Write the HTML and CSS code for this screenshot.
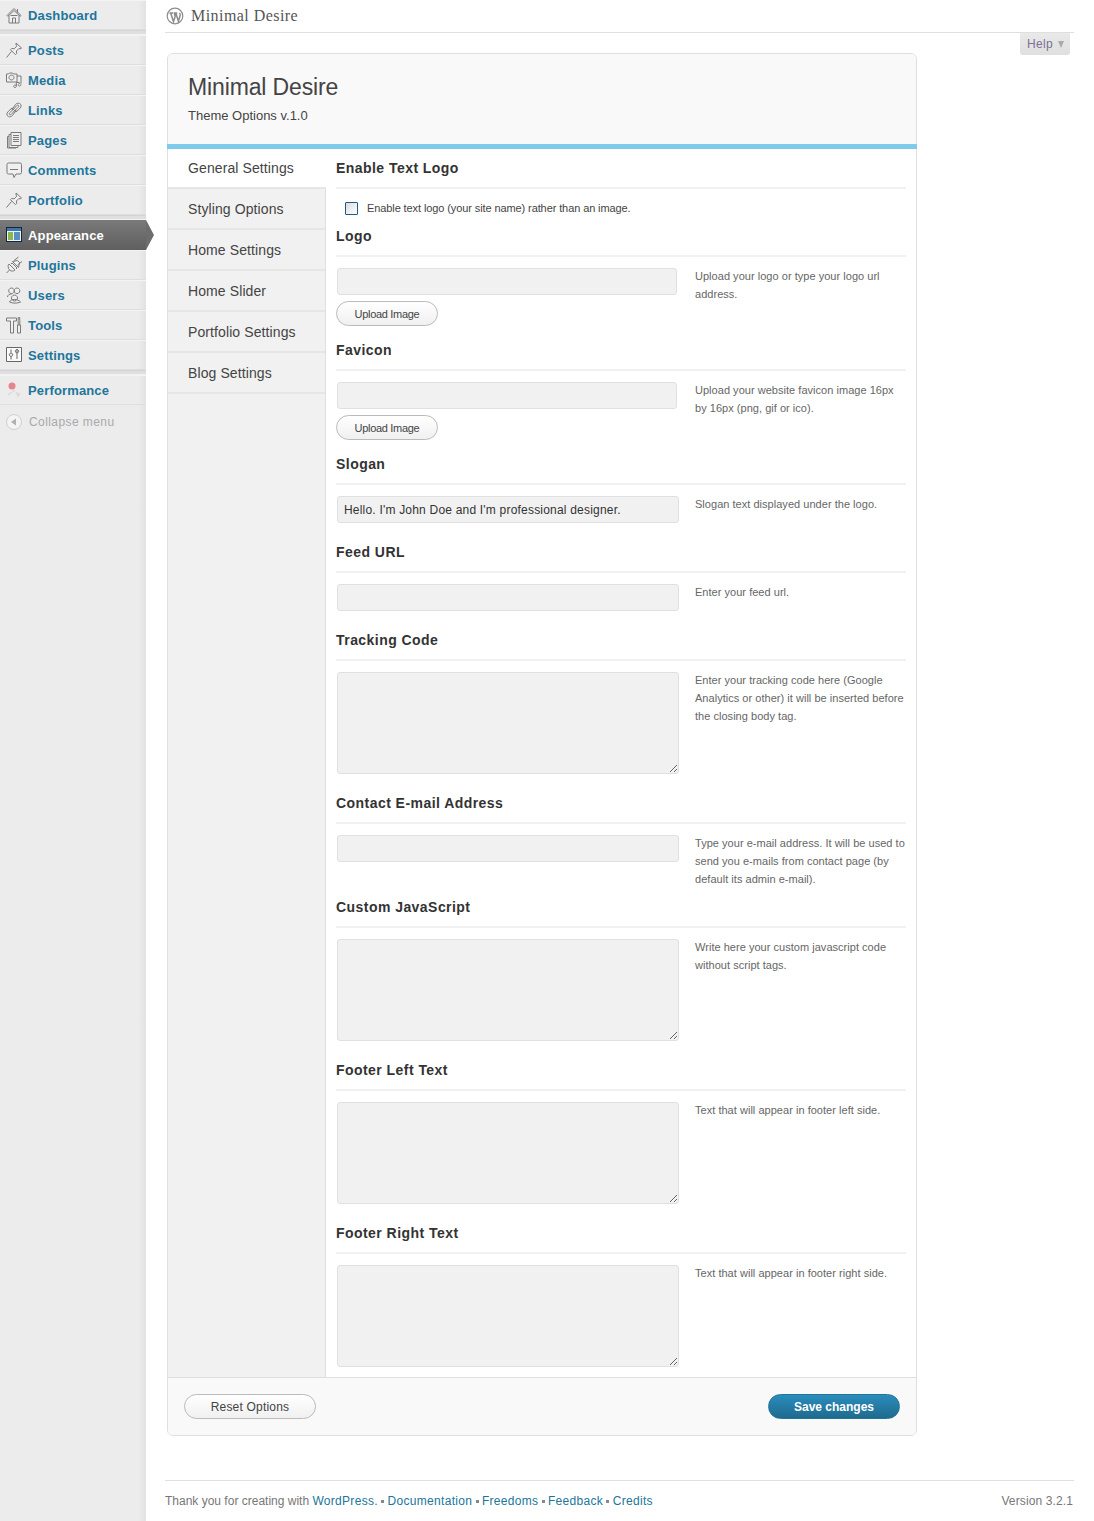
FILE: index.html
```html
<!DOCTYPE html>
<html lang="en">
<head>
<meta charset="utf-8">
<title>Minimal Desire</title>
<link rel="stylesheet" href="styles.css">
</head>
<body>
<div class="shell">
<nav class="side">
  <ul class="menu">
    <li class="item"><svg class="ico" viewBox="0 0 18 18"><path d="M2 9.500 9 2.500l7 7-.8.8L9 4.500 2.800 10.300zM4 9.500V17h10V9.500M7.500 17v-5h3v5M12.500 3v3.500M5.500 9.500h7" /></svg><a href="#">Dashboard</a></li>
    <li class="sep"></li>
    <li class="item"><svg class="ico" viewBox="0 0 18 18"><path d="M11 2l5.500 5-1.500 1-1-.6-2.600 2.600.3 2.500-1.200 1.200-5-5 1.200-1.200 2.500.3 2.600-2.600-.6-1zM6.500 10.500 1.500 16.500" /></svg><a href="#">Posts</a></li>
    <li class="item"><svg class="ico" viewBox="0 0 18 18"><path d="M1.500 3h2l1-1h3l1 1h3.500v8H1.500zM6.500 4a2.500 2.500 0 1 0 .01 0zM12 5h4v7.500M14.500 12.500a1.300 1.300 0 1 0 .01 0zM10 14a1.300 1.300 0 1 0 .01 0zM11.300 15v-3.500h3.200" /></svg><a href="#">Media</a></li>
    <li class="item"><svg class="ico" viewBox="0 0 18 18"><path d="M7 8.500l3.500-5c1.500-2 5-1.500 5.500.5.400 1.500-.5 2.800-1.500 3.800l-3.500 3.200-1.500-1 3.500-3.500c1-1 1-2 .3-2.300-.8-.4-1.500.2-2 .8L8 9zM11 9.500l-3.500 5c-1.500 2-5 1.500-5.500-.5-.400-1.500.5-2.800 1.500-3.800L7 7l1.500 1L5 11.500c-1 1-1 2-.3 2.300.8.400 1.500-.2 2-.8L10 9z" /></svg><a href="#">Links</a></li>
    <li class="item"><svg class="ico" viewBox="0 0 18 18"><path d="M6 1.500h10v13H6zM6 3.500H4v13h9v-2M4 5.500H2.500v11.500H11v-.5M8 4.500h6M8 6.500h6M8 8.500h6M8 10.500h6" /></svg><a href="#">Pages</a></li>
    <li class="item"><svg class="ico" viewBox="0 0 18 18"><path d="M3.500 2h11.500a1.500 1.500 0 0 1 1.500 1.500v8a1.500 1.500 0 0 1-1.500 1.500H11l-2 3.500-1-3.500H3.500a1.500 1.500 0 0 1-1.500-1.500v-8A1.500 1.500 0 0 1 3.500 2zM5 8.500h8" /></svg><a href="#">Comments</a></li>
    <li class="item"><svg class="ico" viewBox="0 0 18 18"><path d="M11 2l5.500 5-1.500 1-1-.6-2.600 2.600.3 2.500-1.200 1.200-5-5 1.200-1.200 2.500.3 2.600-2.600-.6-1zM6.500 10.500 1.500 16.500" /></svg><a href="#">Portfolio</a></li>
    <li class="sep"></li>
    <li class="item current"><svg class="ico-app" viewBox="0 0 18 18"><rect x="1.500" y="1.500" width="15" height="14" fill="#eef3f8" stroke="#15263a"/><rect x="2" y="2" width="14" height="3" fill="#3f74ad"/><rect x="3" y="6" width="5" height="8" fill="#8ab84e"/><rect x="9" y="6" width="6" height="8" fill="#5a8fc4"/></svg><a href="#">Appearance</a></li>
    <li class="item"><svg class="ico" viewBox="0 0 18 18"><path d="M1.500 17l3-3M4 8l6 6c-1.500 1.500-4 1.500-5.500-.2S2.500 9.500 4 8zM6 8l1-1 5 5-1 1M9 4.500 13.500 1M12.500 9l4.500-3.500M7.500 5.500l5-1 2 2-1 5z" /></svg><a href="#">Plugins</a></li>
    <li class="item"><svg class="ico" viewBox="0 0 18 18"><path d="M6.500 2a2.800 2.800 0 1 0 .01 0zM12 2a2.800 2.800 0 1 0 .01 0zM2.500 11c0-2 2-3 4-3M9.500 9a3 3 0 1 0 .01 0zM4.500 16c1-2 2.500-2.500 5-2.500s4.500.8 6 2.500c-3 1.500-8 1.500-11 0z" /></svg><a href="#">Users</a></li>
    <li class="item"><svg class="ico" viewBox="0 0 18 18"><path d="M1.500 2h10v3H8.500v12h-3V5h-4zM12.500 9h3v8h-3zM13.200 9V4.500L13.300 1.500h1.400l.1 3V9" /></svg><a href="#">Tools</a></li>
    <li class="item"><svg class="ico-set" viewBox="0 0 18 18"><path d="M1.500 1.500h15v14h-15zM6 3.500v3M12 3.500v3M6 7a1.700 1.700 0 1 0 .01 0zM12 3.500a1.700 1.700 0 1 0 .01 0zM12 7v6M6 10.500v3" /></svg><a href="#">Settings</a></li>
    <li class="sep"></li>
    <li class="item"><svg class="ico-perf" viewBox="0 0 18 18"><circle cx="7" cy="5" r="3.500" fill="#e8858b"/><path d="M8 8l1 3M3 14l4-3M12 15l3-3M11 11l3 4" fill="none" stroke="#d9d9d9" stroke-width="1.500"/></svg><a href="#">Performance</a></li>
    <li class="collapse"><svg class="ico-col" viewBox="0 0 18 18"><circle cx="9" cy="9" r="7.500" fill="#f4f4f4" stroke="#d0d0d0"/><path d="M11 5.500v7L6 9z" fill="#b0b0b0"/></svg><span>Collapse menu</span></li>
  </ul>
</nav>
<div class="main">
  <header class="top">
    <svg class="wp" viewBox="0 0 18 18"><circle cx="9" cy="9" r="7.800" fill="none" stroke="#8c8c8c" stroke-width="1.200"/><path d="M3.500 6h3.500M4.600 6l2.900 8.500 1.700-5.300-1-3.200M7.600 6h3.600M9.800 6l2.600 8.300 1.700-5.500c.3-1 0-2.200-.7-2.800" fill="none" stroke="#8c8c8c" stroke-width="1.500"/></svg>
    <h1 class="page-title">Minimal Desire</h1>
  </header>
  <div class="help-row"><button class="help" type="button">Help<span class="tri"></span></button></div>

  <form class="panel">
    <div class="panel-head">
      <h2 class="panel-title">Minimal Desire</h2>
      <p class="panel-sub">Theme Options v.1.0</p>
    </div>
    <div class="panel-body">
      <ul class="tabs">
        <li class="tab active">General Settings</li>
        <li class="tab">Styling Options</li>
        <li class="tab">Home Settings</li>
        <li class="tab">Home Slider</li>
        <li class="tab">Portfolio Settings</li>
        <li class="tab">Blog Settings</li>
      </ul>
      <div class="content">
        <section class="opt">
          <h3 class="opt-h">Enable Text Logo</h3>
          <label class="check"><input class="box" type="checkbox"><span class="check-text">Enable text logo (your site name) rather than an image.</span></label>
        </section>
        <section class="opt">
          <h3 class="opt-h">Logo</h3>
          <div class="row">
            <div class="field upload"><input class="inp short" type="text"><button class="btn" type="button">Upload Image</button></div>
            <p class="desc">Upload your logo or type your logo url address.</p>
          </div>
        </section>
        <section class="opt">
          <h3 class="opt-h">Favicon</h3>
          <div class="row">
            <div class="field upload"><input class="inp short" type="text"><button class="btn" type="button">Upload Image</button></div>
            <p class="desc">Upload your website favicon image 16px by 16px (png, gif or ico).</p>
          </div>
        </section>
        <section class="opt">
          <h3 class="opt-h">Slogan</h3>
          <div class="row">
            <div class="field"><input class="inp" type="text" value="Hello. I'm John Doe and I'm professional designer."></div>
            <p class="desc">Slogan text displayed under the logo.</p>
          </div>
        </section>
        <section class="opt">
          <h3 class="opt-h">Feed URL</h3>
          <div class="row">
            <div class="field"><input class="inp" type="text"></div>
            <p class="desc">Enter your feed url.</p>
          </div>
        </section>
        <section class="opt">
          <h3 class="opt-h">Tracking Code</h3>
          <div class="row">
            <div class="field"><textarea class="ta"></textarea></div>
            <p class="desc">Enter your tracking code here (Google Analytics or other) it will be inserted before the closing body tag.</p>
          </div>
        </section>
        <section class="opt">
          <h3 class="opt-h">Contact E-mail Address</h3>
          <div class="row">
            <div class="field"><input class="inp" type="text"></div>
            <p class="desc">Type your e-mail address. It will be used to send you e-mails from contact page (by default its admin e-mail).</p>
          </div>
        </section>
        <section class="opt">
          <h3 class="opt-h">Custom JavaScript</h3>
          <div class="row">
            <div class="field"><textarea class="ta"></textarea></div>
            <p class="desc">Write here your custom javascript code without script tags.</p>
          </div>
        </section>
        <section class="opt">
          <h3 class="opt-h">Footer Left Text</h3>
          <div class="row">
            <div class="field"><textarea class="ta"></textarea></div>
            <p class="desc">Text that will appear in footer left side.</p>
          </div>
        </section>
        <section class="opt">
          <h3 class="opt-h">Footer Right Text</h3>
          <div class="row">
            <div class="field"><textarea class="ta"></textarea></div>
            <p class="desc">Text that will appear in footer right side.</p>
          </div>
        </section>
      </div>
    </div>
    <div class="panel-foot">
      <button class="btn wide" type="button">Reset Options</button>
      <button class="save" type="button">Save changes</button>
    </div>
  </form>

  <footer class="foot">
    <p class="foot-l">Thank you for creating with <a href="#">WordPress.</a> <i class="dot"></i> <a href="#">Documentation</a> <i class="dot"></i> <a href="#">Freedoms</a> <i class="dot"></i> <a href="#">Feedback</a> <i class="dot"></i> <a href="#">Credits</a></p>
    <p class="foot-r">Version 3.2.1</p>
  </footer>
</div>
</div>
</body>
</html>
```
FILE: styles.css
```css
* { box-sizing: border-box; }
html, body { margin: 0; padding: 0; background: #fff; }
body { font-family: "Liberation Sans", Arial, sans-serif; color: #333; height: 1521px; overflow: hidden; }
ul { list-style: none; margin: 0; padding: 0; }
h1, h2, h3, p { margin: 0; font-weight: normal; }
a { text-decoration: none; color: #21759b; }

.shell { display: flex; height: 1521px; }

/* sidebar */
.side { width: 146px; flex: none; background: linear-gradient(90deg, #ececec 0, #ececec 138px, #e2e2e2 146px); }
.item { position: relative; height: 30px; display: flex; align-items: center; padding-left: 5px; gap: 5px; border-bottom: 1px solid #dedede; box-shadow: inset 0 1px 0 #f3f3f3; }
.item a { font-size: 13px; font-weight: bold; letter-spacing: 0.15px; color: #21759b; padding-top: 1px; }
.ico, .ico-set, .ico-app, .ico-perf, .ico-col { width: 18px; height: 18px; flex: none; }
.ico { fill: #f0f0f0; stroke: #7a7a7a; stroke-width: 1; }
.ico-set { fill: #fafafa; stroke: #666; stroke-width: 1; }
.sep { height: 5px; background: #dfdfdf; border-top: 1px solid #d4d4d4; border-bottom: 1px solid #f2f2f2; }
.current { background: linear-gradient(180deg, #7a7a7a, #5f5f5f); border-bottom: 0; box-shadow: none; }
.current a { color: #fff; }
.current::after { content: ""; position: absolute; left: 146px; top: 0; border-style: solid; border-width: 15px 0 15px 8px; border-color: transparent transparent transparent #6d6d6d; }
.collapse { height: 33px; display: flex; align-items: center; padding-left: 5px; gap: 6px; font-size: 12px; letter-spacing: 0.42px; color: #aaa; }

/* main */
.main { width: 909px; margin-left: 19px; display: flex; flex-direction: column; }
.top { height: 33px; display: flex; align-items: center; gap: 7px; padding: 0 0 1px 1px; border-bottom: 1px solid #dfdfdf; }
.wp { width: 18px; height: 18px; flex: none; }
.page-title { font-family: "Liberation Serif", Georgia, serif; font-size: 16px; color: #555; letter-spacing: 0.45px; }
.help-row { height: 20px; position: relative; }
.help { position: absolute; right: 4px; top: 0; width: 50px; height: 22px; padding: 0 0 0 7px; border: 0; border-radius: 0 0 3px 3px; background: linear-gradient(180deg, #e9e9e9, #dfdfdf); font: 12px "Liberation Sans", Arial, sans-serif; color: #7d6f95; letter-spacing: 0.3px; display: flex; align-items: center; gap: 5px; }
.tri { border-style: solid; border-width: 7px 3.500px 0; border-color: #aaa transparent transparent; }

/* panel */
.panel { width: 750px; height: 1383px; margin-left: 2px; border: 1px solid #dfdfdf; border-radius: 6px; display: flex; flex-direction: column; background: #fff; }
.panel-head { position: relative; height: 95px; flex: none; padding: 18px 0 0 20px; background: #f9f9f9; border-radius: 5px 5px 0 0; }
.panel-head::after { content: ""; position: absolute; left: -1px; right: -1px; bottom: 0; height: 5px; background: #7fcbec; }
.panel-title { font-size: 23px; line-height: 30px; color: #444; letter-spacing: -0.13px; }
.panel-sub { margin-top: 5px; font-size: 13px; line-height: 18px; color: #444; }
.panel-body { flex: 1; display: flex; min-height: 0; }

.tabs { width: 158px; flex: none; background: #f1f1f1; border-right: 1px solid #dfdfdf; }
.tab { height: 41px; padding: 0 0 0 20px; display: flex; align-items: center; font-size: 14px; color: #444; letter-spacing: 0.1px; border-bottom: 2px solid #e6e6e6; }
.tab.active { background: #fff; margin-right: -1px; height: 40px; position: relative; }

.content { flex: 1; padding: 7px 10px 0 10px; }
.opt-h { height: 33px; padding-top: 3px; font-size: 14px; line-height: 18px; font-weight: bold; color: #333; letter-spacing: 0.45px; border-bottom: 2px solid #f1f1f1; }
.check { display: flex; align-items: center; height: 24px; margin-top: 11px; padding: 2px 0 9px 9px; gap: 9px; font-size: 11px; color: #444; letter-spacing: -0.1px; }
.check-text { margin-top: -2px; }
.box { appearance: none; margin: 0; width: 13px; height: 13px; border: 1px solid #1c5a8a; border-radius: 1px; background: linear-gradient(135deg, #dcdcdc, #fff); flex: none; }

.row { display: flex; margin-top: 11px; padding-bottom: 7px; }
.field { width: 359px; flex: none; padding-left: 1px; }
.inp { display: block; width: 342px; height: 27px; margin: 0 0 10px; padding: 0 6px; border: 1px solid #e0e0e0; border-radius: 3px; background: #f1f1f1; font: 12px "Liberation Sans", Arial, sans-serif; color: #333; letter-spacing: 0.2px; outline: none; }
.inp.short { width: 340px; margin-bottom: 6px; }
.upload .btn { margin: 0 0 5px -1px; }
.ta { display: block; width: 342px; height: 102px; margin: 0 0 10px; border: 1px solid #e0e0e0; border-radius: 3px; background: #f1f1f1; outline: none; }
.desc { flex: 1; margin-top: -1px; font-size: 11px; line-height: 18px; color: #666; letter-spacing: 0.03px; }

.btn { display: block; width: 102px; height: 25px; padding: 0; border: 1px solid #bbb; border-radius: 13px; background: linear-gradient(180deg, #fff, #f0f0f0); font: 11px "Liberation Sans", Arial, sans-serif; color: #444; letter-spacing: -0.3px; }
.btn.wide { width: 132px; font-size: 12px; letter-spacing: 0.2px; }
.panel-foot { height: 58px; flex: none; display: flex; justify-content: space-between; padding: 16px 16px 0; background: #f9f9f9; border-top: 1px solid #dfdfdf; border-radius: 0 0 5px 5px; }
.save { width: 132px; height: 25px; padding: 0; border: 1px solid #21759b; border-radius: 13px; background: linear-gradient(180deg, #2a8dbb, #1f6a8f); font: bold 12px "Liberation Sans", Arial, sans-serif; color: #fff; }

/* page footer */
.foot { margin-top: 44px; height: 41px; display: flex; justify-content: space-between; align-items: center; padding-right: 1px; border-top: 1px solid #dfdfdf; font-size: 12px; color: #777; }
.foot a { letter-spacing: 0.3px; }
.foot-r { letter-spacing: 0.12px; }
.dot { display: inline-block; width: 3px; height: 3px; background: #888; vertical-align: 2px; }
```
